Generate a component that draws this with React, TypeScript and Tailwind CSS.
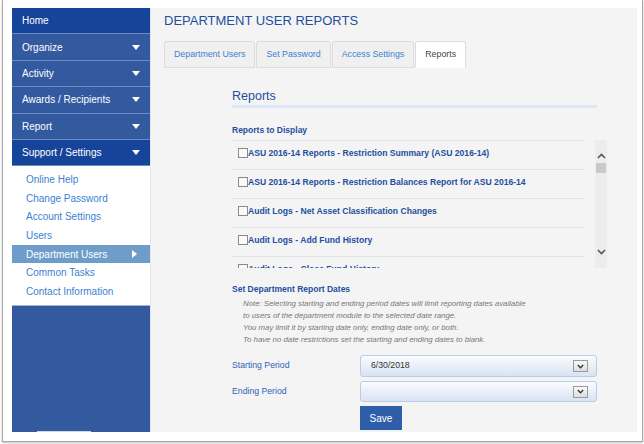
import React from 'react';

const navItems = [
  { label: 'Home', caret: false, dark: true },
  { label: 'Organize', caret: true, dark: false },
  { label: 'Activity', caret: true, dark: false },
  { label: 'Awards / Recipients', caret: true, dark: false },
  { label: 'Report', caret: true, dark: false },
  { label: 'Support / Settings', caret: true, dark: true },
];

const subItems = [
  'Online Help',
  'Change Password',
  'Account Settings',
  'Users',
  'Department Users',
  'Common Tasks',
  'Contact Information',
];

const reports = [
  'ASU 2016-14 Reports - Restriction Summary (ASU 2016-14)',
  'ASU 2016-14 Reports - Restriction Balances Report for ASU 2016-14',
  'Audit Logs - Net Asset Classification Changes',
  'Audit Logs - Add Fund History',
  'Audit Logs - Close Fund History',
];

const tabs = ['Department Users', 'Set Password', 'Access Settings', 'Reports'];

function Caret() {
  return (
    <svg width="8" height="5" viewBox="0 0 8 5">
      <path d="M0 0h8L4 5z" fill="#fff" />
    </svg>
  );
}

function Chevron({ up }: { up?: boolean }) {
  return (
    <svg width="9" height="6" viewBox="0 0 9 6">
      <polyline
        points={up ? '1,5 4.5,1.5 8,5' : '1,1 4.5,4.5 8,1'}
        fill="none"
        stroke="#555"
        strokeWidth="1.6"
      />
    </svg>
  );
}

function SelectBox({ value, h }: { value: string; h: string }) {
  return (
    <div
      className={`w-[237px] ${h} rounded-[3px] border border-[#b9cce8] bg-gradient-to-b from-[#fbfcfe] to-[#d8e3f3] flex items-center justify-between pl-[10px] pr-[8px] text-[8.7px] text-[#333]`}
    >
      <span>{value}</span>
      <div className="w-[15px] h-[12px] border border-[#9a9a9a] bg-gradient-to-b from-[#fafafa] to-[#dcdcdc] flex items-center justify-center">
        <svg width="7" height="5" viewBox="0 0 7 5">
          <polyline points="0.8,1 3.5,3.8 6.2,1" fill="none" stroke="#333" strokeWidth="1.3" />
        </svg>
      </div>
    </div>
  );
}

export default function App() {
  return (
    <div className="w-[644px] h-[444px] bg-white font-['Liberation_Sans',Arial,sans-serif] overflow-hidden">
      <div className="ml-[2px] w-[641px] h-[442px] border-l border-r border-b border-[#a9a9a9] shadow-[0_1px_2px_rgba(0,0,0,0.25)] pl-[9px] pt-[8px]">
        <div className="flex w-[625px] h-[424px]">
          {/* sidebar */}
          <div className="w-[138px] flex flex-col bg-white">
            {navItems.map((n) => (
              <div
                key={n.label}
                className={`h-[26.4px] border-b border-[#6b8bc3] flex items-center justify-between pl-[10px] pr-[10px] text-[10px] text-white ${
                  n.dark ? 'bg-[#17449b]' : 'bg-[#33599f]'
                }`}
              >
                <span>{n.label}</span>
                {n.caret && <Caret />}
              </div>
            ))}
            <div className="flex flex-col py-[4px]">
              {subItems.map((s) => {
                const active = s === 'Department Users';
                return (
                  <div
                    key={s}
                    className={`h-[18.6px] flex items-center justify-between pl-[14px] pr-[13px] text-[10px] ${
                      active ? 'bg-[#6f9dca] text-white' : 'text-[#3d7fd1]'
                    }`}
                  >
                    <span>{s}</span>
                    {active && (
                      <svg width="5" height="8" viewBox="0 0 5 8">
                        <path d="M0 0l5 4-5 4z" fill="#fff" />
                      </svg>
                    )}
                  </div>
                );
              })}
            </div>
            <div className="flex-1 bg-[#335a9e] border-t border-[#9fb3d6] flex flex-col justify-end">
              <div className="ml-[25px] w-[54px] h-[1px] bg-[#cfd6e2]" />
            </div>
          </div>

          {/* main */}
          <div className="flex-1 bg-[#f4f4f4] border-l border-[#e2e6ee]">
            <div className="pl-[13px]">
              <div className="mt-[5px] h-[16px] leading-[16px] text-[13px] text-[#1f4f9e]">
                DEPARTMENT USER REPORTS
              </div>
              <div className="mt-[12px] flex h-[27px]">
                {tabs.map((t) => {
                  const active = t === 'Reports';
                  return (
                    <div
                      key={t}
                      className={`h-[27px] px-[9px] mr-[1px] flex items-center border border-[#dcdcdc] rounded-t-[3px] text-[8.8px] ${
                        active ? 'bg-white text-[#444] border-b-white' : 'bg-[#f0f0f0] text-[#3d7fd1]'
                      }`}
                    >
                      {t}
                    </div>
                  );
                })}
              </div>
            </div>

            <div className="ml-[81px] w-[375px]">
              <div className="mt-[19px] w-[365px] h-[18px] leading-[18px] text-[12.5px] text-[#1f4f9e]">Reports</div>
              <div className="w-[365px] h-[3px] bg-[#dbe6f6]" />
              <div className="mt-[16px] h-[12px] leading-[12px] text-[8.5px] font-bold text-[#1f4f9e]">
                Reports to Display
              </div>
              <div className="mt-[4px] flex h-[128px]">
                <div className="w-[353px] h-[128px] overflow-hidden">
                  {reports.map((r) => (
                    <div key={r} className="h-[29px] border-t border-[#e2e2e2] flex items-start pl-[6px] pt-[6px]">
                      <div className="w-[10px] h-[10px] mt-[1px] border border-[#8a8a8a] bg-[#fafafa] shrink-0" />
                      <span className="text-[8.6px] font-bold text-[#1f4f9e] leading-[12px] whitespace-nowrap">
                        {r}
                      </span>
                    </div>
                  ))}
                </div>
                <div className="ml-[10px] w-[12px] h-[128px] bg-[#ececec] flex flex-col items-center">
                  <div className="mt-[13px]">
                    <Chevron up />
                  </div>
                  <div className="mt-[4px] w-[10px] h-[10px] bg-[#c9c9c9]" />
                  <div className="flex-1" />
                  <div className="mb-[13px]">
                    <Chevron />
                  </div>
                </div>
              </div>

              <div className="mt-[15px] h-[12px] leading-[12px] text-[8.5px] font-bold text-[#1f4f9e]">
                Set Department Report Dates
              </div>
              <div className="mt-[3px] pl-[11px] text-[7.8px] leading-[12px] italic text-[#777]">
                <div>Note: Selecting starting and ending period dates will limit reporting dates available</div>
                <div>to users of the department module to the selected date range.</div>
                <div>You may limit it by starting date only, ending date only, or both.</div>
                <div>To have no date restrictions set the starting and ending dates to blank.</div>
              </div>

              <div className="mt-[9px] flex items-center">
                <div className="w-[128px] text-[8.7px] text-[#2d63b4]">Starting Period</div>
                <SelectBox value="6/30/2018" h="h-[22px]" />
              </div>
              <div className="mt-[4px] flex items-center">
                <div className="w-[128px] text-[8.7px] text-[#2d63b4]">Ending Period</div>
                <SelectBox value="" h="h-[21px]" />
              </div>
              <div className="mt-[4px] ml-[128px] w-[42px] h-[24px] bg-[#2f5ea8] text-white text-[10px] flex items-center justify-center">
                Save
              </div>
            </div>
          </div>
        </div>
      </div>
    </div>
  );
}
